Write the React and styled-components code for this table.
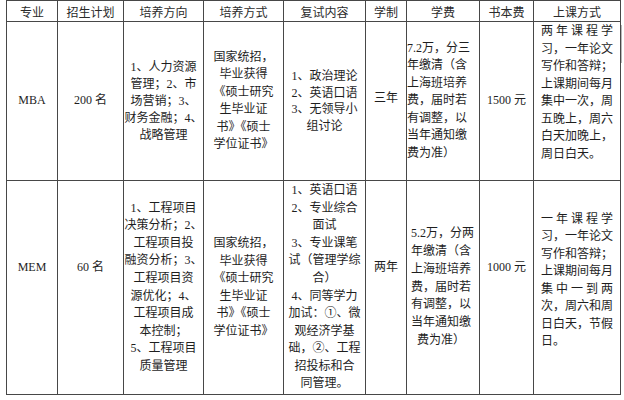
import React from "react";
import styled, { createGlobalStyle } from "styled-components";

const Global = createGlobalStyle`
  html, body { margin: 0; padding: 0; background: #ffffff; }
  body { font-family: "Liberation Serif", "Noto Sans CJK SC", serif; color: #1e1e1e; }
`;

const Page = styled.div`
  position: relative;
  width: 624px;
  height: 400px;
  overflow: hidden;
  background: #fff;
`;

const Table = styled.div`
  display: grid;
  grid-template-columns: 51px 66px 80px 80px 82px 41px 73px 54px 87px;
  grid-template-rows: 21px 159px 214px;
  width: max-content;
  margin-left: 6px;
  border-left: 1px solid #474747;
  border-top: 1px solid #474747;
`;

const Cell = styled.div`
  box-sizing: border-box;
  border-right: 1px solid #474747;
  border-bottom: 1px solid #474747;
  display: flex;
  flex-direction: column;
  justify-content: center;
  align-items: ${(p) => (p.$mode === "left" ? "flex-start" : p.$mode === "justify" ? "stretch" : "center")};
  padding: 0 ${(p) => p.$px || 0}px ${(p) => p.$shift || 0}px ${(p) => p.$pl ?? p.$px ?? 0}px;
  font-size: 12px;
  line-height: ${(p) => p.$lh || 17.5}px;
  white-space: nowrap;
  font-family: "Liberation Serif", "Noto Sans CJK SC", serif;
`;

const HeadCell = styled(Cell)`
  font-family: "Noto Sans CJK SC", sans-serif;
  font-size: 12px;
  line-height: 20px;
  color: #2a2a2a;
  padding-top: 1px;
`;

const Line = styled.div`
  text-align: ${(p) => (p.$spread ? "justify" : "inherit")};
  text-align-last: ${(p) => (p.$spread ? "justify" : "auto")};
  padding-left: ${(p) => p.$indent || 0}px;
`;

const ScrollMark = styled.div`
  position: absolute;
  right: 2px;
  top: 25px;
  width: 1px;
  height: 38px;
  background: #b8b8b8;
`;

const headers = ["专业", "招生计划", "培养方向", "培养方式", "复试内容", "学制", "学费", "书本费", "上课方式"];

const rows = [
  [
    { lines: ["MBA"] },
    { lines: ["200 名"] },
    { lines: ["1、人力资源", "管理；2、市", "场营销；3、", "财务金融；4、", "战略管理"], lh: 17, shift: -2 },
    { lines: ["国家统招，", "毕业获得", "《硕士研究", "生毕业证", "书》《硕士", "学位证书》"], shift: -2 },
    { lines: ["1、政治理论", "2、英语口语", "3、无领导小", "组讨论"], lh: 16.5 },
    { lines: ["三年"], shift: 4 },
    { lines: ["7.2万，分三", "年缴清（含", "上海班培养", "费，届时若", "有调整，以", "当年通知缴", "费为准）"], mode: "left", pl: 4, shift: -2 },
    { lines: ["1500 元"] },
    {
      lines: [["两年课程学", true], "习，一年论文", "写作和答辩；", "上课期间每月", "集中一次，周", "五晚上，周六", "白天加晚上，", "周日白天。"],
      mode: "justify",
      px: 7,
      shift: 16,
    },
  ],
  [
    { lines: ["MEM"], shift: 40 },
    { lines: ["60 名"], shift: 40 },
    {
      lines: ["1、工程项目", "决策分析；2、", "工程项目投", "融资分析；3、", "工程项目资", "源优化；4、", "工程项目成", "本控制；", "5、工程项目", "质量管理"],
      lh: 17.6,
    },
    { lines: ["国家统招，", "毕业获得", "《硕士研究", "生毕业证", "书》《硕士", "学位证书》"] },
    {
      lines: ["1、英语口语", "2、专业综合", "面试", "3、专业课笔", "试（管理学综", "合）", "4、同等学力", "加试：①、微", "观经济学基", "础，②、工程", "招投标和合", "同管理。"],
      lh: 17.6,
    },
    { lines: ["两年"], shift: 40 },
    { lines: ["5.2万，分两", "年缴清（含", "上海班培养", "费，届时若", "有调整，以", "当年通知缴", ["费为准）", false, 6]], mode: "left", pl: 4, lh: 17.8 },
    { lines: ["1000 元"], shift: 40 },
    {
      lines: [["一年课程学", true], "习，一年论文", "写作和答辩；", "上课期间每月", ["集中一到两", true], "次，周六和周", "日白天，节假", "日。"],
      mode: "justify",
      px: 7,
      shift: 14,
    },
  ],
];

export default function App() {
  return (
    <Page>
      <Global />
      <Table>
        {headers.map((h) => (
          <HeadCell key={h}>{h}</HeadCell>
        ))}
        {rows.map((row, ri) =>
          row.map((c, ci) => (
            <Cell
              key={`${ri}-${ci}`}
              $mode={c.mode}
              $px={c.px}
              $pl={c.pl}
              $lh={c.lh}
              $shift={c.shift}
            >
              {c.lines.map((l, li) => {
                const [text, spread, indent] = Array.isArray(l) ? l : [l, false, 0];
                return (
                  <Line key={li} $spread={spread} $indent={indent}>
                    {text}
                  </Line>
                );
              })}
            </Cell>
          ))
        )}
      </Table>
      <ScrollMark />
    </Page>
  );
}
